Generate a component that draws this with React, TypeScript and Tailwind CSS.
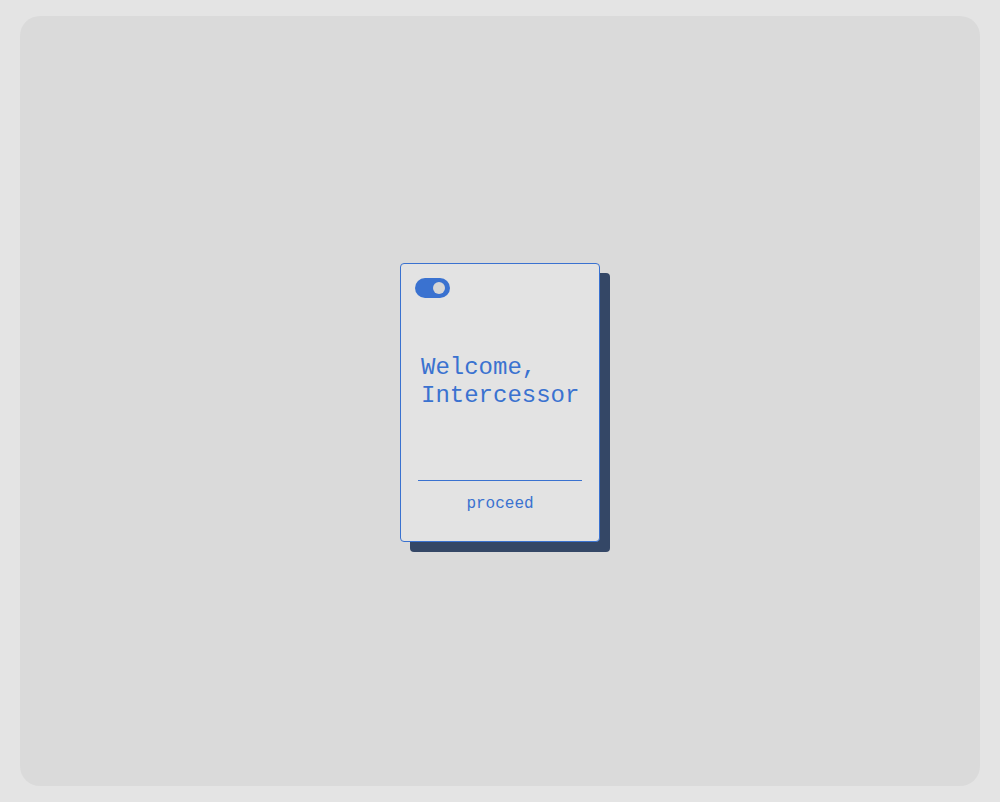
export default function App() {
  return (
    <div className="w-full h-[802px] bg-[#e4e4e4] px-[20px] py-[16px]">
      <div className="h-[770px] rounded-[20px] bg-[#dadada] pt-[247px]">
        <div
          className="mx-auto w-[200px] h-[279px] rounded-[4px] border border-[#3a72d0] bg-[#e3e3e3] shadow-[10px_10px_0_0_#344766] px-[14px] pt-[14px]"
          style={{ fontFamily: '"Liberation Mono", "Courier New", monospace' }}
        >
          <div className="w-[35px] h-[20px] rounded-full bg-[#3a72d0] flex items-center justify-end pr-[5px]">
            <div className="w-[12px] h-[12px] rounded-full bg-[#d6d6d6]" />
          </div>
          <div className="mt-[56px] pl-[6px] text-[24px] leading-[28px] text-[#3a72d0]">
            <div className="h-[28px]">Welcome,</div>
            <div className="h-[28px]">Intercessor</div>
          </div>
          <div className="mt-[70px] mx-[3px] h-px bg-[#3a72d0]" />
          <div className="mt-[13px] h-[20px] text-center text-[16px] leading-[20px] text-[#3a72d0]">proceed</div>
        </div>
      </div>
    </div>
  );
}
